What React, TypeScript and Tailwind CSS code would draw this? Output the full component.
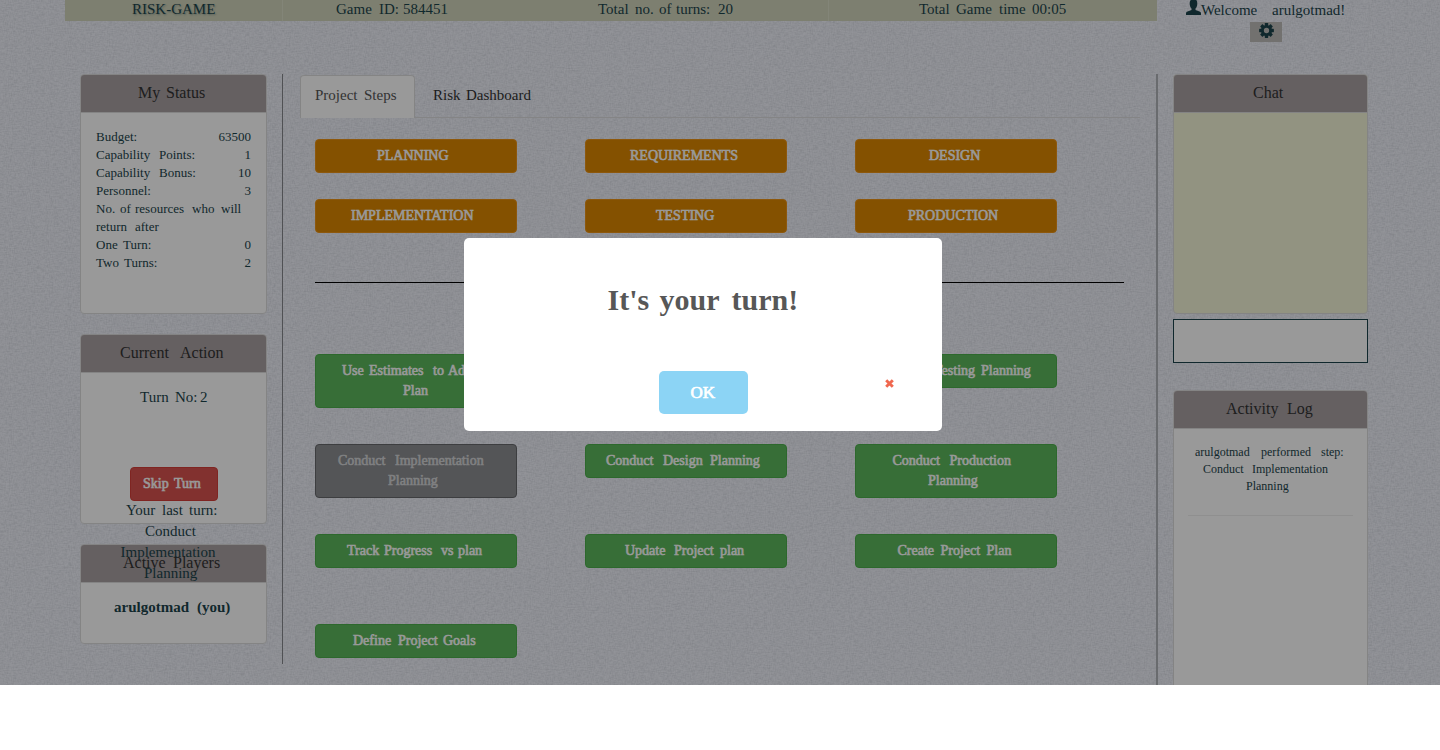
import React from 'react';

type Item = [string, string?];

/* A run of words, each one with its own advance. */
function Words({ items }: { items: Item[] }) {
  return (
    <>
      {items.map(([word, width], i) => (
        <span key={i} className={`inline-block whitespace-nowrap ${width ?? ''}`}>
          {word}
        </span>
      ))}
    </>
  );
}

function Line({ items, className = '' }: { items: Item[]; className?: string }) {
  return (
    <div className={`whitespace-nowrap ${className}`}>
      <Words items={items} />
    </div>
  );
}

function PanelHeader({ items, className = '' }: { items: Item[]; className?: string }) {
  return (
    <div
      className={`h-[38px] rounded-t-[3px] border-b border-[#ddd] bg-[#a8a0a2] pt-[9px] text-[16px] leading-[18px] text-[#333] ${className}`}
    >
      <Line items={items} />
    </div>
  );
}

const stats: { items: Item[]; value?: string }[] = [
  { items: [['Budget:']], value: '63500' },
  { items: [['Capability', 'w-[63px]'], ['Points:']], value: '1' },
  { items: [['Capability', 'w-[63px]'], ['Bonus:']], value: '10' },
  { items: [['Personnel:']], value: '3' },
  { items: [['No.', 'w-[24px]'], ['of', 'w-[15px]'], ['resources', 'w-[57px]'], ['who', 'w-[29px]'], ['will']] },
  { items: [['return', 'w-[39px]'], ['after']] },
  { items: [['One', 'w-[27px]'], ['Turn:']], value: '0' },
  { items: [['Two', 'w-[28px]'], ['Turns:']], value: '2' },
];

const phases: [string, string][] = [
  ['PLANNING', 'pl-[61px]'],
  ['REQUIREMENTS', 'pl-[44px]'],
  ['DESIGN', 'pl-[73px]'],
  ['IMPLEMENTATION', 'pl-[35px]'],
  ['TESTING', 'pl-[70px]'],
  ['PRODUCTION', 'pl-[52px]'],
];

type Step = { lines: { items: Item[]; pad: string }[]; done?: boolean } | null;

const steps: Step[] = [
  {
    lines: [
      { items: [['Use', 'w-[27px]'], ['Estimates', 'w-[64px]'], ['to', 'w-[15px]'], ['Adjust']], pad: 'pl-[26px]' },
      { items: [['Plan']], pad: 'pl-[87px]' },
    ],
  },
  null,
  { lines: [{ items: [['Conduct', 'w-[53px]'], ['Testing', 'w-[47px]'], ['Planning']], pad: 'pl-[25px]' }] },
  {
    done: true,
    lines: [
      { items: [['Conduct', 'w-[57px]'], ['Implementation']], pad: 'pl-[22px]' },
      { items: [['Planning']], pad: 'pl-[72px]' },
    ],
  },
  { lines: [{ items: [['Conduct', 'w-[57px]'], ['Design', 'w-[47px]'], ['Planning']], pad: 'pl-[20px]' }] },
  {
    lines: [
      { items: [['Conduct', 'w-[57px]'], ['Production']], pad: 'pl-[36.5px]' },
      { items: [['Planning']], pad: 'pl-[72px]' },
    ],
  },
  { lines: [{ items: [['Track', 'w-[37px]'], ['Progress', 'w-[57px]'], ['vs', 'w-[17px]'], ['plan']], pad: 'pl-[31px]' }] },
  { lines: [{ items: [['Update', 'w-[49px]'], ['Project', 'w-[46px]'], ['plan']], pad: 'pl-[39px]' }] },
  { lines: [{ items: [['Create', 'w-[43px]'], ['Project', 'w-[46px]'], ['Plan']], pad: 'pl-[41.5px]' }] },
  { lines: [{ items: [['Define', 'w-[45px]'], ['Project', 'w-[45px]'], ['Goals']], pad: 'pl-[37px]' }] },
];

/* Fine cloth texture: horizontal threads crossed by vertical ones. */
function Linen() {
  return (
    <svg className="absolute inset-0 h-full w-full" aria-hidden="true">
      <filter id="weft" x="0" y="0" width="100%" height="100%">
        <feTurbulence type="fractalNoise" baseFrequency="0.22 0.95" numOctaves="2" seed="4" />
        <feColorMatrix values="0 0 0 0 0.2  0 0 0 0 0.22  0 0 0 0 0.26  1.1 0 0 0 -0.42" />
      </filter>
      <filter id="warp" x="0" y="0" width="100%" height="100%">
        <feTurbulence type="fractalNoise" baseFrequency="0.95 0.3" numOctaves="2" seed="9" />
        <feColorMatrix values="0 0 0 0 0.2  0 0 0 0 0.22  0 0 0 0 0.26  1.1 0 0 0 -0.42" />
      </filter>
      <rect width="100%" height="100%" filter="url(#weft)" opacity="0.26" />
      <rect width="100%" height="100%" filter="url(#warp)" opacity="0.22" />
    </svg>
  );
}

function UserIcon() {
  return (
    <svg width="15" height="15" viewBox="0 0 15 15" className="block" fill="currentColor">
      <path d="M7.5-1C10.200-1 11.300.6 11.300 3.500c0 2.400-.7 4-1.800 5.100v1.300l4 1.700c1 .4 1.500 1 1.500 1.900V15H0v-1.500c0-.9.500-1.500 1.500-1.900l4-1.700V8.600C4.400 7.500 3.700 5.900 3.700 3.500 3.700.6 4.800-1 7.500-1Z" />
    </svg>
  );
}

function CogIcon() {
  return (
    <svg width="15" height="15" viewBox="-7.500 -7.500 15 15" className="block">
      {[0, 45, 90, 135].map((a) => (
        <g key={a} transform={`rotate(${a})`} fill="currentColor">
          <rect x="-1.700" y="-7.400" width="3.400" height="3.500" rx="0.4" />
          <rect x="-1.700" y="3.900" width="3.400" height="3.500" rx="0.4" />
        </g>
      ))}
      <circle r="4.100" fill="none" stroke="currentColor" strokeWidth="2.900" />
    </svg>
  );
}

export default function App() {
  return (
    <div className="h-[750px] w-[1440px] overflow-hidden bg-white font-['Liberation_Serif',serif] text-[15px] text-[#1c444b]">
      <div className="relative h-[685px] overflow-hidden bg-[#f3f5fd]">
        <Linen />
        <div className="relative h-[685px]">
          <header className="flex h-[74px] items-start leading-[17px]">
            <div className="ml-[65px] flex h-[21px] w-[1092px] bg-[#d1d4bb] pt-px">
              <div className="-mt-px w-[218px] border-r border-[#dbdec8] pl-[67px] pt-px [text-shadow:1px_1px_2px_#1c444b66]">
                RISK-GAME
              </div>
              <Line className="w-[273px] pl-[53px]" items={[['Game', 'w-[43px]'], ['ID:', 'w-[24px]'], ['584451']]} />
              <Line
                className="-mt-px w-[273px] border-r border-[#dbdec8] pl-[42px] pt-px"
                items={[['Total', 'w-[37px]'], ['no.', 'w-[24px]'], ['of', 'w-[17px]'], ['turns:', 'w-[42px]'], ['20']]}
              />
              <Line className="pl-[90px]" items={[['Total', 'w-[37px]'], ['Game', 'w-[43px]'], ['time', 'w-[33px]'], ['00:05']]} />
            </div>
            <div className="ml-[29px]">
              <div className="flex h-[22px] items-start">
                <UserIcon />
                <Line className="pt-[2px]" items={[['Welcome', 'w-[71px]'], ['arulgotmad!']]} />
              </div>
              <button className="ml-[64px] flex h-5 w-8 items-start justify-center bg-[#bfbdba] pt-px">
                <CogIcon />
              </button>
            </div>
          </header>

          <div className="flex items-start">
            <aside className="ml-[80px] w-[187px]">
              <section className="mb-5 h-[240px] rounded border border-[#ddd] bg-white">
                <PanelHeader className="pl-[57px]" items={[['My', 'w-[28px]'], ['Status']]} />
                <div className="px-[15px] pt-[15px] text-[13px] leading-[18px]">
                  {stats.map((s, i) => (
                    <div key={i} className="flex justify-between">
                      <Line items={s.items} />
                      {s.value && <span>{s.value}</span>}
                    </div>
                  ))}
                </div>
              </section>
              <section className="mb-5 h-[190px] rounded border border-[#ddd] bg-white">
                <PanelHeader className="pl-[39px]" items={[['Current', 'w-[60px]'], ['Action']]} />
                <div className="pt-[14px] leading-[21px]">
                  <Line className="mb-[59px] pl-[59px]" items={[['Turn', 'w-[35px]'], ['No:', 'w-[25px]'], ['2']]} />
                  <button className="ml-[49px] block h-[34px] w-[88px] rounded border border-[#d43f3a] bg-[#d9534f] text-left text-[14px] leading-[20px] text-white [-webkit-text-stroke:0.6px_white]">
                    <Line className="pl-[12px]" items={[['Skip', 'w-[31px]'], ['Turn']]} />
                  </button>
                  <Line className="-mt-px pl-[45px]" items={[['Your', 'w-[36px]'], ['last', 'w-[27px]'], ['turn:']]} />
                  <Line className="pl-[64px]" items={[['Conduct']]} />
                  <Line className="pl-[39.5px]" items={[['Implementation']]} />
                  <Line className="pl-[63px]" items={[['Planning']]} />
                </div>
              </section>
              <section className="h-[100px] rounded border border-[#ddd] bg-white">
                <PanelHeader className="pl-[42px]" items={[['Active', 'w-[50px]'], ['Players']]} />
                <Line className="pl-[33px] pt-[14px] font-bold leading-[21px]" items={[['arulgotmad', 'w-[83px]'], ['(you)']]} />
              </section>
            </aside>

            <main className="ml-[15px] h-[590px] w-[874px] border-l border-[#85878c] pl-[17px]">
              <nav className="flex h-[44px] w-[840px] items-start border-b border-[#dcdcde] pt-px leading-[21px]">
                <Line
                  className="h-[43px] w-[115px] rounded-t border border-b-0 border-[#ddd] bg-white pl-[14px] pt-[9px] text-[#555]"
                  items={[['Project', 'w-[49px]'], ['Steps']]}
                />
                <Line className="pl-[18px] pt-[10px] text-[#333]" items={[['Risk', 'w-[33px]'], ['Dashboard']]} />
              </nav>
              <div className="pl-[15px] pt-[21px] text-[14px] leading-[20px] text-white [-webkit-text-stroke:0.6px_currentColor]">
                <div className="grid grid-cols-[202px_202px_202px] gap-x-[68px] gap-y-[26px]">
                  {phases.map(([name, pad]) => (
                    <button key={name} className={`h-[34px] rounded border border-[#eb9316] bg-[#dd8800] text-left ${pad}`}>
                      {name}
                    </button>
                  ))}
                </div>
                <div className="mt-[49px] w-[809px] border-t border-black" />
                <div className="mt-[71px] grid auto-rows-[90px] grid-cols-[202px_202px_202px] items-start gap-x-[68px]">
                  {steps.map((s, i) =>
                    s ? (
                      <button
                        key={i}
                        className={`rounded border py-[6px] text-left ${
                          s.done ? 'border-[#66686c] bg-[#8c8e92] text-[#d5d6d8]' : 'border-[#4cae4c] bg-[#5cb85c]'
                        }`}
                      >
                        {s.lines.map((l, j) => (
                          <Line key={j} className={l.pad} items={l.items} />
                        ))}
                      </button>
                    ) : (
                      <div key={i} />
                    ),
                  )}
                </div>
              </div>
            </main>

            <aside className="h-[611px] w-[212px] border-l-2 border-[#b0b2b8] pl-[15px]">
              <section className="h-[240px] w-[195px] rounded border border-[#ddd] bg-[#f3f5d8]">
                <PanelHeader className="pl-[79px]" items={[['Chat']]} />
              </section>
              <input className="mt-[5px] block h-[44px] w-[195px] border border-[#1c444b] bg-white outline-none" />
              <section className="mt-[27px] h-[320px] w-[195px] rounded border border-[#ddd] bg-white">
                <PanelHeader className="pl-[52px]" items={[['Activity', 'w-[61px]'], ['Log']]} />
                <div className="mx-[14px] border-b border-[#eee] pb-[20px] pt-[15px] text-[12px] leading-[17px]">
                  <Line className="pl-[7px]" items={[['arulgotmad', 'w-[66px]'], ['performed', 'w-[60px]'], ['step:']]} />
                  <Line className="pl-[15px]" items={[['Conduct', 'w-[49px]'], ['Implementation']]} />
                  <Line className="pl-[58px]" items={[['Planning']]} />
                </div>
              </section>
            </aside>
          </div>
        </div>

        <div className="absolute inset-0 bg-black/40" />
        <div className="absolute left-[464px] top-[237.5px] h-[193.5px] w-[478px] rounded-[5px] bg-white pt-[42px]">
          <Line
            className="pl-[143.5px] text-[30px] font-bold leading-[40px] text-[#575757]"
            items={[["It's", 'w-[52px]'], ['your', 'w-[72px]'], ['turn!']]}
          />
          <div className="flex items-start pl-[195px] pt-[51px]">
            <button className="h-[43.5px] w-[88.5px] rounded-[5px] bg-[#8cd4f5] pl-[31.5px] text-left text-[17px] leading-[44px] text-white [-webkit-text-stroke:0.7px_white]">
              OK
            </button>
            <svg width="9" height="9" viewBox="0 0 9 9" className="ml-[137.5px] mt-[8.5px]">
              <path d="M1.200 1.200 7.800 7.800M7.800 1.200 1.200 7.800" stroke="#f0684f" strokeWidth="2.900" />
            </svg>
          </div>
        </div>
      </div>
    </div>
  );
}
